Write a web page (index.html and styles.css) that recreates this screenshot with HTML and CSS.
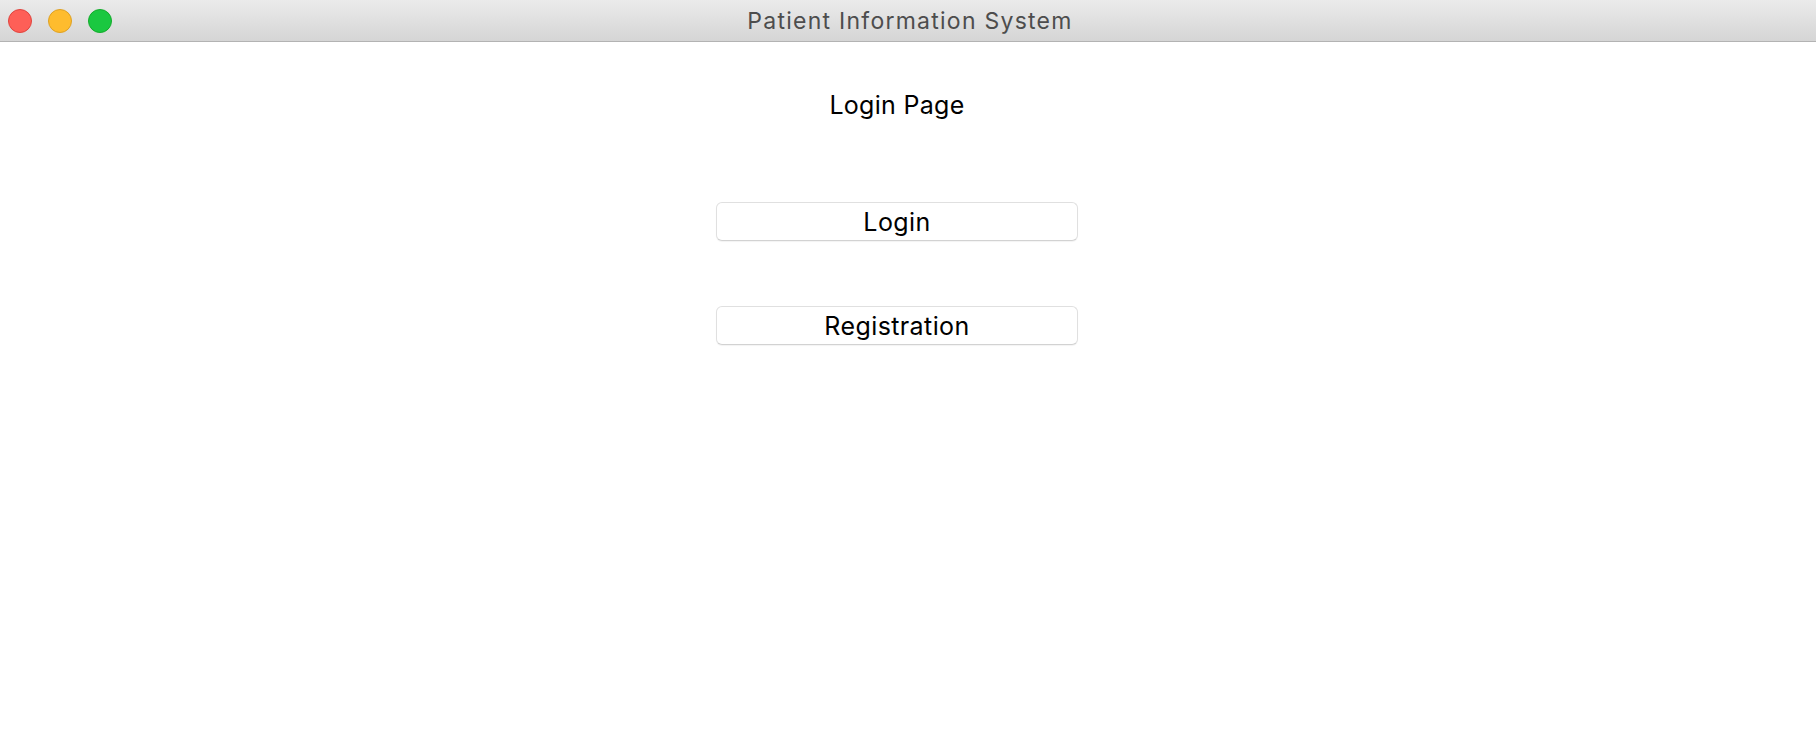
FILE: index.html
```html
<!DOCTYPE html>
<html>
<head>
<meta charset="utf-8">
<link rel="stylesheet" href="styles.css">
</head>
<body>
<div class="window">
  <div class="titlebar">
    <div class="lights">
      <span class="light red"></span>
      <span class="light yellow"></span>
      <span class="light green"></span>
    </div>
    <div class="title">Patient Information System</div>
  </div>
  <main class="content">
    <h1 class="heading">Login Page</h1>
    <button class="btn">Login</button>
    <button class="btn">Registration</button>
  </main>
</div>
</body>
</html>
```
FILE: styles.css
```css
html, body {
  margin: 0;
  padding: 0;
  background: #ffffff;
}
body {
  font-family: Inter, "Liberation Sans", sans-serif;
  width: 1816px;
  height: 746px;
  overflow: hidden;
}
.window {
  display: flex;
  flex-direction: column;
  height: 100%;
}
.titlebar {
  height: 41px;
  border-bottom: 1px solid #b3b3b3;
  background: linear-gradient(to bottom, #ebebeb, #d5d5d5);
  display: flex;
  align-items: center;
  position: relative;
}
.lights {
  display: flex;
  gap: 16px;
  padding-left: 8px;
}
.light {
  width: 22px;
  height: 22px;
  border-radius: 50%;
  display: block;
}
.red { background: #fe5f57; border: 1px solid #e0443e; }
.yellow { background: #febc2e; border: 1px solid #dea123; }
.green { background: #1ac840; border: 1px solid #14ac2b; }
.title {
  position: absolute;
  left: 0;
  right: 0;
  top: 8px;
  text-align: center;
  font-size: 23px;
  line-height: 26px;
  letter-spacing: 1.25px;
  color: #4d4d4d;
  padding-left: 4px;
  pointer-events: none;
}
.content {
  display: flex;
  flex-direction: column;
  align-items: center;
  padding-right: 22px;
}
.heading {
  margin: 47px 0 0;
  font-size: 25px;
  font-weight: 400;
  line-height: 32px;
  letter-spacing: 0.3px;
  color: #000;
}
.btn {
  width: 362px;
  height: 39px;
  margin-top: 81px;
  background: #ffffff;
  border: 1px solid #e0e0e0;
  border-bottom-color: #d2d2d2;
  border-radius: 6px;
  box-shadow: 0 1px 1px rgba(0,0,0,0.05);
  font-family: Inter, "Liberation Sans", sans-serif;
  font-size: 25px;
  letter-spacing: 0.4px;
  color: #000;
  padding: 1px 0 0;
}
.btn + .btn {
  margin-top: 65px;
}
```
